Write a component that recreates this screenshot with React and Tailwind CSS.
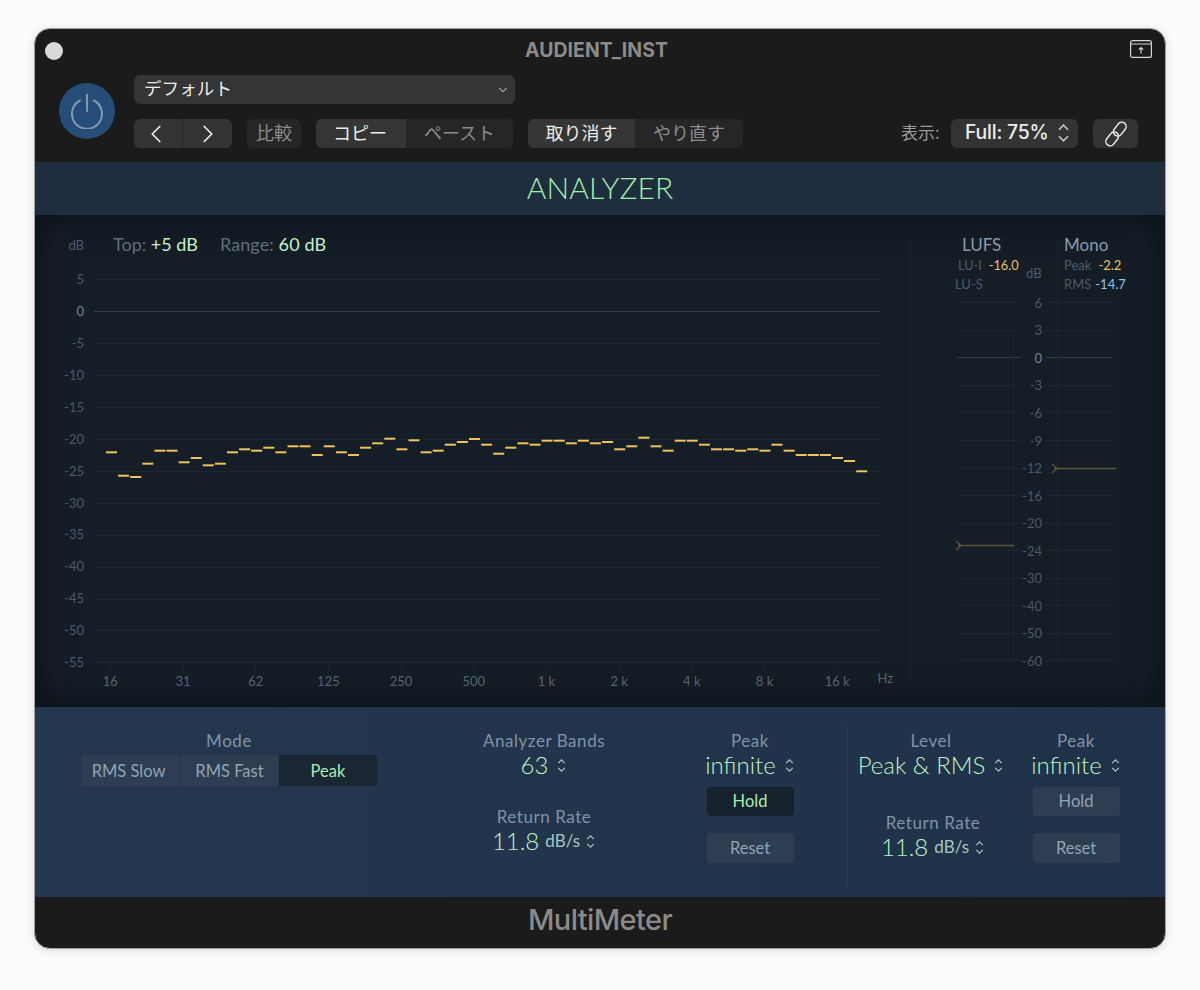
import { ChevronDown, ChevronLeft, ChevronRight } from "lucide-react";

const bandLevels = [
  452.3, 475.7, 477, 463.7, 450.7, 450.7, 462.3, 458, 465.3, 463.7, 452.3, 449.3, 450.7, 447.7, 452.3, 446.3,
  446.3, 455, 446.3, 452.3, 455, 447.7, 443.3, 438.7, 449.3, 440.3, 452.3, 450.7, 444.7, 442, 439, 444.7,
  453.7, 447.7, 443.3, 444.7, 440.7, 440.7, 443.3, 440.7, 443.3, 442, 449.3, 446.3, 437.7, 446.3, 450.7, 440.7,
  440.7, 444.7, 449.3, 449.3, 450.7, 449.3, 450.7, 444.7, 450.7, 455, 455, 455, 458, 461, 471.3,
];
const dbLabels = ["5", "0", "-5", "-10", "-15", "-20", "-25", "-30", "-35", "-40", "-45", "-50", "-55"];
const freqLabels = ["16", "31", "62", "125", "250", "500", "1 k", "2 k", "4 k", "8 k", "16 k"];
const meterLabels = ["6", "3", "0", "-3", "-6", "-9", "-12", "-16", "-20", "-24", "-30", "-40", "-50", "-60"];

function UpDown({ className = "" }) {
  return (
    <svg viewBox="0 0 10 16" className={className} fill="none" stroke="currentColor" strokeWidth="1.3">
      <path d="M1.5 5.5 5 2l3.5 3.5M1.5 10.5 5 14l3.5-3.5" />
    </svg>
  );
}

function Label({ children }) {
  return <div className="h-[20px] text-[17px] leading-[20px] tracking-[0.55px] text-[#8092a6] text-center whitespace-nowrap">{children}</div>;
}

function HoldButton({ active }) {
  return (
    <div
      className={`w-[87px] h-[29px] mx-auto rounded-[4px] flex items-center justify-center text-[16.5px] ${
        active ? "bg-[#17222f] text-[#a5f0ae]" : "bg-[#2d3e52] text-[#93a3b5]"
      }`}
    >
      Hold
    </div>
  );
}

function ResetButton() {
  return (
    <div className="w-[87px] h-[30px] mt-[17px] mx-auto rounded-[4px] flex items-center justify-center text-[16.5px] bg-[#2d3e52] text-[#93a3b5]">
      Reset
    </div>
  );
}

function Value({ children, unit }) {
  return (
    <div className="h-[28px] flex items-center justify-center gap-[8px] text-[24px] font-light leading-[28px] text-[#bdf5c3] whitespace-nowrap">
      <span>{children}</span>
      {unit && <span className="text-[17px] font-normal text-[#a4c8c0] -ml-[2px] -mr-[3px]">{unit}</span>}
      <UpDown className="w-[11px] h-[15px] text-[#a9c4c2]" />
    </div>
  );
}

function App() {
  return (
    <div className="w-[1200px] h-[990px] bg-[#fbfbfb] pt-[28px] pl-[34px] font-['Lato',sans-serif]">
      <div className="w-[1132px] h-[921px] rounded-[16px] border border-[#a2a2a2] bg-[#1b1b1b] overflow-hidden shadow-[0_2px_10px_rgba(0,0,0,0.12)]">
        {/* header */}
        <div className="h-[133px] font-['Noto_Sans_CJK_JP',sans-serif]">
          <div className="h-[46px] flex items-center pl-[10px] pr-[13px]">
            <div className="w-[18px] h-[18px] rounded-full bg-[#d9d9d9] -mt-[3px]" />
            <div className="flex-1 text-center -mt-[3px] text-[19.4px] font-bold text-[#8b8b8b] font-['Inter',sans-serif] tracking-[0.1px]">
              AUDIENT_INST
            </div>
            <svg viewBox="0 0 22 18" className="w-[22px] h-[18px] -mt-[7px]" fill="none" stroke="#d6d6d6" strokeWidth="1.2">
              <rect x="0.6" y="0.6" width="20.8" height="16.8" rx="2" />
              <path d="M1 4h20" />
              <path d="M11 13.5V7.5M8.8 9.7 11 7.5l2.2 2.2" />
            </svg>
          </div>
          <div className="flex pl-[24px]">
            <div className="w-[56px] h-[56px] mt-[8px] rounded-full bg-[#264d78] flex items-center justify-center">
              <svg viewBox="0 0 36 36" className="w-[36px] h-[36px]" fill="none" stroke="#8298ad" strokeWidth="2">
                <path d="M11 7.5a15 15 0 1 0 14 0" strokeLinecap="round" />
                <path d="M18 1.5V18" strokeLinecap="round" />
              </svg>
            </div>
            <div className="ml-[19px] w-[1005px]">
              <div className="w-[381px] h-[29px] pb-[2px] rounded-[6px] bg-[#353535] flex items-center pl-[10px] pr-[5px] text-[17.6px] text-[#ececec]">
                <span className="flex-1">デフォルト</span>
                <ChevronDown className="w-[14px] h-[14px] mt-[2px] text-[#9a9a9a]" />
              </div>
              <div className="flex items-center mt-[15px] h-[29px] text-[18px]">
                <div className="w-[98px] h-full rounded-[6px] bg-[#333333] flex text-[#ececec]">
                  <div className="w-[49px] flex items-center justify-center border-r border-[#262626]">
                    <ChevronLeft className="w-[30px] h-[30px] ml-[-5px]" strokeWidth={1.4} />
                  </div>
                  <div className="w-[49px] flex items-center justify-center">
                    <ChevronRight className="w-[30px] h-[30px]" strokeWidth={1.4} />
                  </div>
                </div>
                <div className="ml-[15px] w-[54px] h-full pb-[3px] rounded-[6px] bg-[#262626] flex items-center justify-center text-[#8c8c8c]">比較</div>
                <div className="ml-[15px] w-[197px] h-full rounded-[6px] bg-[#262626] flex overflow-hidden">
                  <div className="w-[90px] pb-[3px] pr-[2px] bg-[#353535] text-[#ececec] flex items-center justify-center">コピー</div>
                  <div className="flex-1 pb-[3px] text-[#8c8c8c] flex items-center justify-center">ペースト</div>
                </div>
                <div className="ml-[15px] w-[215px] h-full rounded-[6px] bg-[#262626] flex overflow-hidden">
                  <div className="w-[107px] pb-[3px] bg-[#353535] text-[#ececec] flex items-center justify-center">取り消す</div>
                  <div className="flex-1 pb-[3px] text-[#8c8c8c] flex items-center justify-center">やり直す</div>
                </div>
                <div className="ml-[158px] w-[40px] pb-[3px] text-[#9a9a9a] text-[17px] whitespace-nowrap">表示:</div>
                <div className="ml-[10px] w-[127px] h-full pb-[2px] rounded-[6px] bg-[#333333] flex items-center pl-[14px] text-[19.4px] font-medium text-[#ececec] font-['Inter',sans-serif] whitespace-nowrap">
                  <span className="flex-1 tracking-[-0.2px]">Full: 75%</span>
                  <UpDown className="w-[13px] h-[22px] mr-[8px] text-[#c4c4c4]" />
                </div>
                <div className="ml-[15px] w-[45px] h-full rounded-[6px] bg-[#333333] flex items-center justify-center">
                  <svg viewBox="0 0 24 24" className="w-[26px] h-[26px]" fill="none" stroke="#ececec" strokeWidth="1.4">
                    <rect x="11.5" y="0.5" width="8" height="14" rx="4" transform="rotate(38 15.5 7.5)" />
                    <rect x="4.5" y="9.5" width="8" height="14" rx="4" transform="rotate(38 8.5 16.5)" />
                  </svg>
                </div>
              </div>
            </div>
          </div>
        </div>

        {/* title band */}
        <div className="h-[53px] pb-[3px] bg-[#1f2e3f] flex items-center justify-center text-[30px] font-light text-[#9ff0a9] tracking-[0.1px]">
          ANALYZER
        </div>

        {/* analyzer */}
        <div className="h-[492px] flex bg-[#151d27] shadow-[inset_0_0_36px_rgba(5,9,14,0.7)]">
          <div className="relative w-[875px] shrink-0">
            <div className="h-[49px] flex pt-[19px] text-[18px] leading-[20px]">
              <div className="w-[49px] pt-[1px] text-right text-[13px] text-[#4f5c6a]">dB</div>
              <div className="ml-[29px] text-[#5f6e7d]">
                Top: <span className="text-[#c4f1cb]">+5 dB</span>
              </div>
              <div className="ml-[22px] tracking-[0.1px] text-[#5f6e7d]">
                Range: <span className="text-[#c4f1cb]">60 dB</span>
              </div>
            </div>
            {dbLabels.map((db) => (
              <div key={db} className="h-[31.92px] flex items-center">
                <div className={`w-[49px] text-right text-[13px] ${db === "0" ? "text-[#78858f]" : "text-[#4c5966]"}`}>{db}</div>
                <div className={`ml-[10px] w-[787px] h-px ${db === "0" ? "bg-[#333c46]" : "bg-[#1e2731]"}`} />
              </div>
            ))}
            {/* frequency axis */}
            <div className="flex -mt-[15px] ml-[39px]">
              {freqLabels.map((f) => (
                <div key={f} className="w-[72.7px] shrink-0 flex flex-col items-center">
                  <div className="w-px h-[6px] bg-[#1e2731]" />
                  <div className="text-[13px] leading-[16px] mt-[3px] text-[#56636f]">{f}</div>
                </div>
              ))}
              <div className="text-[13px] leading-[16px] ml-[4px] mt-[6px] text-[#56636f]">Hz</div>
            </div>
            {/* band levels */}
            <svg viewBox="35 215 875 492" className="absolute left-0 top-0 w-[875px] h-[492px] pointer-events-none">
              {bandLevels.map((y, i) => (
                <rect key={i} x={106 + i * 12.1} y={y - 1} width="11" height="2" fill="#eec45c" />
              ))}
            </svg>
          </div>

          <div className="w-px h-[440px] mt-[25px] bg-[#1c2530] shrink-0" />

          {/* loudness and mono meters */}
          <div className="relative flex-1">
            <div className="h-[74px] flex">
              <div className="ml-[44px] w-[68px] pt-[20px]">
                <div className="ml-[7px] h-[20px] text-[17px] leading-[20px] text-[#8a9cab]">LUFS</div>
                <div className="h-[20px] mt-[1px] flex items-center ml-[3px] text-[12.7px] whitespace-nowrap">
                  <span className="text-[#4e5b68]">LU-I</span>
                  <span className="ml-[7px] text-[#e9c25a]">-16.0</span>
                </div>
                <div className="h-[18px] flex items-center text-[13px] text-[#4e5b68]">LU-S</div>
              </div>
              <div className="ml-[3px] w-[20px] pt-[49px] text-[13px] leading-[18px] text-[#4e5b68]">dB</div>
              <div className="ml-[18px] pt-[20px]">
                <div className="h-[20px] text-[17px] leading-[20px] text-[#8a9cab]">Mono</div>
                <div className="h-[20px] mt-[1px] flex items-center text-[13px] whitespace-nowrap">
                  <span className="text-[#4e5b68]">Peak</span>
                  <span className="ml-[7px] text-[#e9c25a]">-2.2</span>
                </div>
                <div className="h-[18px] flex items-center text-[13px] whitespace-nowrap">
                  <span className="text-[#4e5b68]">RMS</span>
                  <span className="ml-[4px] text-[#8fc3e8]">-14.7</span>
                </div>
              </div>
            </div>
            {meterLabels.map((m) => (
              <div key={m} className="h-[27.55px] flex items-center">
                <div className={`ml-[46px] w-[64px] h-px ${m === "0" ? "bg-[#333c46]" : "bg-[#1e2731]"}`} />
                <div className={`w-[21px] text-right text-[13px] leading-[14px] ${m === "0" ? "text-[#78858f]" : "text-[#4c5966]"}`}>{m}</div>
                <div className={`ml-[4px] w-[67px] h-px ${m === "0" ? "bg-[#333c46]" : "bg-[#1e2731]"}`} />
              </div>
            ))}
            {/* meter channels and level markers */}
            <svg viewBox="911 215 254 492" className="absolute left-0 top-0 w-[254px] h-[492px] pointer-events-none" fill="none">
              <path d="M1013.5 330V660M1057.5 240V660" stroke="#1e2731" />
              <path d="M956 541 961 545.5 956 550M958 545.5H1014" stroke="#5f5538" strokeWidth="1.3" />
              <path d="M1052 464 1057 468.5 1052 473M1054 468.5H1116" stroke="#5f5538" strokeWidth="1.3" />
            </svg>
          </div>
        </div>

        {/* controls */}
        <div className="h-[190px] flex pt-[24px] bg-gradient-to-r from-[#24374e] to-[#20324a]">
          <div className="ml-[46px] w-[296px]">
            <Label>Mode</Label>
            <div className="mt-[4px] h-[31px] rounded-[4px] flex overflow-hidden text-[16.5px]">
              <div className="w-[99px] pt-[2px] pr-[3px] bg-[#2d3e52] text-[#93a3b5] flex items-center justify-center border-r border-[#24344a]">RMS Slow</div>
              <div className="w-[99px] pt-[2px] bg-[#2d3e52] text-[#93a3b5] flex items-center justify-center">RMS Fast</div>
              <div className="flex-1 pt-[2px] bg-[#1a2634] text-[#a5f0ae] flex items-center justify-center">Peak</div>
            </div>
          </div>
          <div className="ml-[67px] w-[200px]">
            <Label>Analyzer Bands</Label>
            <Value>63</Value>
            <div className="mt-[28px]">
              <Label>Return Rate</Label>
              <Value unit="dB/s">11.8</Value>
            </div>
          </div>
          <div className="ml-[36px] w-[140px]">
            <Label>Peak</Label>
            <Value>infinite</Value>
            <div className="mt-[8px]">
              <HoldButton active />
            </div>
            <ResetButton />
          </div>
          <div className="ml-[27px] w-px h-[160px] -mt-[6px] bg-[#2c3e54]" />
          <div className="ml-[3px] w-[160px]">
            <Label>Level</Label>
            <Value>Peak &amp; RMS</Value>
            <div className="mt-[34px] pl-[4px]">
              <Label>Return Rate</Label>
              <Value unit="dB/s">11.8</Value>
            </div>
          </div>
          <div className="ml-[5px] w-[120px]">
            <Label>Peak</Label>
            <Value>infinite</Value>
            <div className="mt-[8px]">
              <HoldButton />
            </div>
            <ResetButton />
          </div>
        </div>

        {/* footer */}
        <div className="h-[51px] pb-[6px] flex items-center justify-center text-[29px] font-medium text-[#8a8a8a] font-['Inter',sans-serif] tracking-[-0.6px]">
          MultiMeter
        </div>
      </div>
    </div>
  );
}

export default App;
